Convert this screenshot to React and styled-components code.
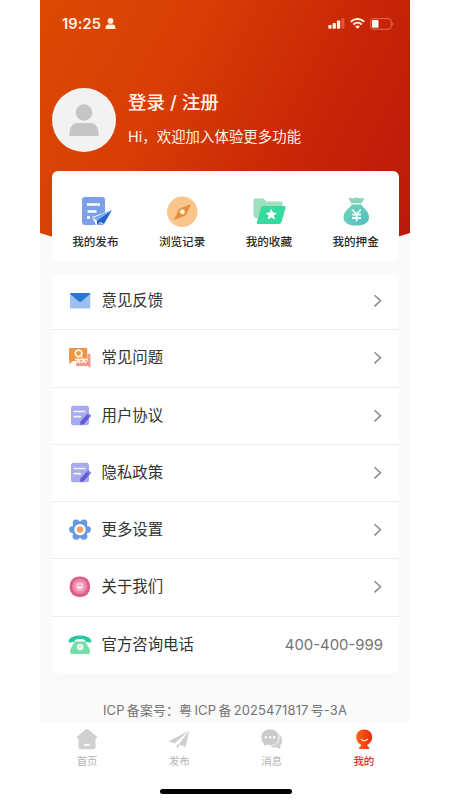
import React from "react";
import styled, { createGlobalStyle } from "styled-components";

const GlobalStyle = createGlobalStyle`
  *, *::before, *::after { box-sizing: border-box; }
  body { margin: 0; background: #fff; }
  svg { display: block; flex: none; }
`;

const Phone = styled.main`
  width: 370px;
  height: 800px;
  margin-left: 40px;
  display: flex;
  flex-direction: column;
  background: #fafafa;
  color: #333;
  font-family: Inter, "Noto Sans CJK SC", sans-serif;
  white-space: nowrap;
  overflow: hidden;
`;

const Hero = styled.header`
  height: 246px;
  flex: none;
  color: #fff3e8;
  background: linear-gradient(118deg, #dc4a03 0%, #d73d05 35%, #c92706 65%, #bb180d 100%);
  clip-path: polygon(0 0, 100% 0, 100% 233px, 96.5% 237px, 75% 244px, 50% 246px, 25% 244px, 3.5% 237px, 0 233px);
`;

const StatusBar = styled.div`
  height: 47px;
  padding: 0 16px 0 22px;
  display: flex;
  align-items: center;
  justify-content: space-between;
`;

const StatusGroup = styled.div`
  display: flex;
  align-items: center;
  gap: ${({ $gap }) => $gap}px;
`;

const Clock = styled.time`
  font-size: 14.6px;
  font-weight: 600;
  letter-spacing: 0.15px;
`;

const Profile = styled.div`
  display: flex;
  gap: 12px;
  padding: 41px 12px 0;
`;

const Avatar = styled.div`
  width: 64px;
  height: 64px;
  flex: none;
  display: grid;
  place-items: center;
  border-radius: 50%;
  background: #f2f2f2;
`;

const Greeting = styled.div`
  display: flex;
  flex-direction: column;
  gap: 11px;
  padding-top: 1px;
`;

const Login = styled.div`
  font-size: 18.5px;
  line-height: 26px;
  font-weight: 500;
`;

const Welcome = styled.div`
  font-size: 14.4px;
  line-height: 22px;
  letter-spacing: 0.05px;
`;

const QuickCard = styled.nav`
  position: relative;
  height: 91px;
  margin: -75px 11px 0 12px;
  flex: none;
  display: grid;
  grid-template-columns: repeat(4, 1fr);
  border-radius: 6px;
  background: #fff;
`;

const QuickItem = styled.div`
  display: flex;
  flex-direction: column;
  align-items: center;
  padding-top: 23px;
  gap: 3px;
  color: #2b2b2b;
  font-size: 11.6px;
  line-height: 18px;
  font-weight: 500;
`;

const List = styled.section`
  margin: 11px 11px 0 12px;
  flex: none;
  background: #fff;
  border-radius: 6px;
`;

const Row = styled.div`
  height: 57.25px;
  padding: 0 17px 0 15.5px;
  display: flex;
  align-items: center;
  border-bottom: 1px solid #ededed;
  &:last-child { height: 56px; border-bottom: 0; padding-right: 16px; }
`;

const RowLabel = styled.span`
  flex: 1;
  margin-left: 10px;
  font-size: 15.4px;
  line-height: 24px;
`;

const Hotline = styled.span`
  font-size: 14.9px;
  color: #737373;
`;

const Filing = styled.footer`
  flex: none;
  height: 49px;
  padding-top: 27px;
  text-align: center;
  font-size: 12.9px;
  line-height: 22px;
  letter-spacing: 0.17px;
  word-spacing: -1.5px;
  color: #737373;
`;

const Bottom = styled.div`
  flex: 1;
  display: flex;
  flex-direction: column;
  background: #fff;
`;

const TabBar = styled.nav`
  flex: 1;
  padding-left: 1px;
  display: grid;
  grid-template-columns: repeat(4, 1fr);
`;

const Tab = styled.div`
  display: flex;
  flex-direction: column;
  align-items: center;
  padding-top: 6px;
  gap: 2px;
  color: ${({ $active }) => ($active ? "#dc3029" : "#b3b3b3")};
  font-size: 10.5px;
  line-height: 16px;
  font-weight: ${({ $active }) => ($active ? 500 : 400)};
`;

const HomeBar = styled.div`
  width: 132px;
  height: 5px;
  margin: 0 0 6.5px 120px;
  border-radius: 3px;
  background: #000;
`;

const PersonIcon = ({ size, color }) => (
  <svg width={size} height={size} viewBox="0 0 32 32" fill={color}>
    <circle cx="16" cy="8.5" r="8.3" />
    <path d="M1.5 32v-3c0-6 3.5-10 8-10h13c4.5 0 8 4 8 10v3z" />
  </svg>
);

const SignalIcon = () => (
  <svg width="17" height="11" viewBox="0 0 17 11" fill="#fff0df">
    <rect x=".3" y="7" width="3.3" height="3.7" rx=".8" />
    <rect x="4.6" y="5" width="3.3" height="5.7" rx=".8" />
    <rect x="8.9" y="2.5" width="3.3" height="8.2" rx=".8" />
    <rect x="13.4" width="3" height="10.5" rx=".8" opacity=".25" />
  </svg>
);

const WifiIcon = () => (
  <svg width="15" height="11" viewBox="0 0 15 11" fill="none" stroke="#fff0df" strokeWidth="2.1">
    <path d="M.8 3.8c3.8-3.7 9.6-3.7 13.4 0M3.3 6.4c2.4-2.2 6-2.2 8.4 0" />
    <path d="M5.2 8.4c1.5-1.2 3.1-1.2 4.6 0L7.5 10.7z" fill="#fff0df" stroke="none" />
  </svg>
);

const BatteryIcon = () => (
  <svg width="24" height="12" viewBox="0 0 24 12">
    <rect x=".6" y=".6" width="20.6" height="10.6" rx="2.8" fill="none" stroke="#f3a18c" strokeOpacity=".6" />
    <rect x="2" y="2" width="6.5" height="7.8" rx="1.2" fill="#fff" />
    <path d="M22.3 4.2c1.5.5 1.5 3 0 3.5z" fill="#f3a18c" fillOpacity=".6" />
  </svg>
);

const PublishIcon = () => (
  <svg width="34" height="36" viewBox="0 0 34 36">
    <rect x="4" y="3" width="23" height="28" rx="3" fill="#7c9fe9" />
    <path d="M9 10.5h13M9.5 17.5h9M9 23.5h3" stroke="#fff" strokeWidth="2.5" />
    <path d="M14 23 34 16 27 31 21 28.5 18.5 33 16.5 27.5z" fill="#fff" />
    <path d="M34 16 14.5 24l4.5 2.3z" fill="#79aaf0" />
    <path d="M34 16 19 26.5v4.5l3-3 4 2z" fill="#2265cf" />
  </svg>
);

const CompassIcon = () => (
  <svg width="34" height="36" viewBox="0 0 34 36">
    <circle cx="17.3" cy="17.8" r="15.2" fill="#f9c58b" />
    <path d="M26 10 21 21 9 26l5-11z" fill="#e98b34" />
    <circle cx="17.4" cy="17.8" r="2.7" fill="#fff4dd" stroke="#d9b169" />
  </svg>
);

const FolderIcon = () => (
  <svg width="34" height="36" viewBox="0 0 34 36">
    <path d="M1.5 6.5a2 2 0 0 1 2-2h8l3 3h14a2 2 0 0 1 2 2v15h-25q-4 0-4-4z" fill="#9edfbd" />
    <path d="M10.5 12H32q2 0 1.5 2l-4 14q-.6 2-2.5 2H6.5q-2.2 0-1.5-2l4-14q.5-2 1.5-2z" fill="#36d99e" />
    <path d="m19.3 14.8 1.7 3.7 4 .4-3 2.7.9 4-3.6-2.1-3.5 2.1.8-4-3-2.7 4-.4z" fill="#fff" />
  </svg>
);

const MoneyIcon = () => (
  <svg width="34" height="36" viewBox="0 0 34 36">
    <defs>
      <linearGradient id="bag" x2="1" y2="1">
        <stop stopColor="#72d6bb" />
        <stop offset="1" stopColor="#51bdc0" />
      </linearGradient>
    </defs>
    <path d="m9.5 3.8 4.5.8 3.5-1 3.5 1 4.5-.8-3.7 7h-9z" fill="#8bd2bb" />
    <path d="M13 10.5h9c2.5 3.5 8 7 8 12.7 0 5-4 8.4-12.7 8.4S4.5 28.2 4.5 23.2C4.5 17.5 10.5 14 13 10.5z" fill="url(#bag)" />
    <path d="M12.5 9.7h10" stroke="#effff8" strokeWidth="1.3" />
    <path d="m13.2 15.5 4.3 5 4.3-5M17.5 20.5v7M13 20.7h9M13 24h9" stroke="#efffff" strokeWidth="1.8" fill="none" />
  </svg>
);

const MailIcon = () => (
  <svg width="24" height="24" viewBox="0 0 24 24">
    <rect x="2" y="4.2" width="20.3" height="15.3" rx="1" fill="#9dc0f1" />
    <path d="M2 4.7q0-.7 1-.7h18.3q1 0 1 .7l-8.2 7.4q-2 1.7-4 0z" fill="#2b77ce" />
    <path d="M8.5 10.7q3.7 4.2 7.3 0l-1.7 1.4q-2 1.7-4 0z" fill="#46a6d5" />
  </svg>
);

const QuestionIcon = () => (
  <svg width="24" height="24" viewBox="0 0 24 24">
    <path d="M19.5 8h2.9v14l-2.7-2H8v-4.5h11.5z" fill="#f1998c" />
    <rect x="1" y="2" width="18.2" height="13" rx="1.2" fill="#eb9546" />
    <path d="M1.4 14v4.2L6 14z" fill="#eb9546" />
    <ellipse cx="10.6" cy="7.4" rx="3.3" ry="3.3" fill="none" stroke="#fff3df" strokeWidth="1.8" />
    <path d="m11.6 8.9 2.6 2.3" stroke="#fff3df" strokeWidth="1.6" />
    <path d="M7 13.4h12.5M8.5 17.2l1.8-3.3 1.8 3.3M14 17.2l1.8-3.3 1.8 3.3" stroke="#fff3df" strokeWidth="1.6" fill="none" />
  </svg>
);

const DocumentIcon = () => (
  <svg width="24" height="24" viewBox="0 0 24 24">
    <rect x="3" y="1.7" width="18" height="19.5" rx="2.5" fill="#a8abed" />
    <path d="M6.2 7.5h10.5M6.2 12.7h6" stroke="#f4f4ff" strokeWidth="1.7" strokeLinecap="round" />
    <path d="m12.5 17.6 7.6-8.4 3 2.6-7.4 8.5-3.6.8z" fill="#625ad6" />
    <path d="m18.7 10.7 1.4-1.5 3 2.6-1.4 1.5z" fill="#8380df" />
  </svg>
);

const SettingsIcon = () => (
  <svg width="24" height="24" viewBox="0 0 24 24">
    <g fill="#6898df">
      <circle cx="12" cy="11.6" r="8.3" />
      <circle cx="4.5" cy="11.6" r="3.4" /><circle cx="19.5" cy="11.6" r="3.4" />
      <circle cx="8.1" cy="5" r="3.5" /><circle cx="15.9" cy="5" r="3.5" />
      <circle cx="8.1" cy="18.2" r="3.5" /><circle cx="15.9" cy="18.2" r="3.5" />
    </g>
    <circle cx="12" cy="11.6" r="5.7" fill="#f7fbff" />
    <circle cx="12" cy="11.6" r="3.2" fill="#efa164" />
  </svg>
);

const AboutIcon = () => (
  <svg width="24" height="24" viewBox="0 0 24 24">
    <rect x="1.7" y="1.5" width="20.3" height="20.5" rx="9" fill="#dc5c86" />
    <circle cx="11.8" cy="11.3" r="7.6" fill="#ec86a7" />
    <circle cx="11.8" cy="11.6" r="4.7" fill="#f6b1c6" />
    <path d="M8.6 11.5q3.2 4.5 6.4 0" fill="#fff1f5" />
    <path d="M8.8 9.2h1.6M13.2 9.2h1.6" stroke="#fff0f5" strokeWidth="1.2" />
  </svg>
);

const TelephoneIcon = () => (
  <svg width="24" height="24" viewBox="0 0 24 24">
    <path d="M6.5 8.6h11c1 3.6 4.5 6.4 4.5 9.6v1.5q0 1.2-1.2 1.2H3.4q-1.2 0-1.2-1.2v-1.5c0-3.2 3.3-6 4.3-9.6z" fill="#79dda9" />
    <path d="M.8 7.2C3.7 1 20.3 1 23.2 7.2c.6 1.4-.3 2.4-1.6 2.3l-2.9-.5c-1.2-.2-1.7-1-1.5-2.1-3-1.1-7.4-1.1-10.4 0 .2 1.1-.3 1.9-1.5 2.1l-2.9.5C1.1 9.6.2 8.6.8 7.2z" fill="#27c9a0" />
    <circle cx="12.2" cy="14" r="3.2" fill="#e9fff3" />
    <circle cx="12.2" cy="14" r="1.2" fill="#c4f0d8" />
  </svg>
);

const ChevronIcon = () => (
  <svg width="9" height="14" viewBox="0 0 9 14" fill="none" stroke="#888" strokeWidth="1.5">
    <path d="m1.5 1.2 6 5.6-6 5.6" />
  </svg>
);

const HomeIcon = () => (
  <svg width="24" height="24" viewBox="0 0 24 24">
    <path d="M12 .9q.8 0 1.4.5l8.3 7q1 1 0 1.8h-1.2V19q0 2.2-2.2 2.2H5.7q-2.2 0-2.2-2.2v-8.8H2.3q-1-.8 0-1.8l8.3-7q.6-.5 1.4-.5z" fill="#d0d0d0" />
    <path d="M9 17h6" stroke="#fff" strokeWidth="1.6" />
  </svg>
);

const SendIcon = () => (
  <svg width="24" height="24" viewBox="0 0 24 24" fill="#d0d0d0">
    <path d="M22.2 2.5 1.5 13.2l6.4 2.3z" />
    <path d="M22.2 2.5 18.6 19l-7-2.5zM9.5 16.2l3.3 1.2-2.7 3.6z" />
    <path d="M22.2 2.5 9.2 15.8" stroke="#fff" strokeWidth=".5" />
  </svg>
);

const ChatIcon = () => (
  <svg width="24" height="24" viewBox="0 0 24 24">
    <path d="M18.5 5.5c3.4 2.5 4.5 6 3.5 9.3-.3 1.1-1 2.1-1.8 2.9v3.6l-3-1.9c-4 .5-6.9-.4-8.8-3z" fill="#d0d0d0" />
    <path d="M10.1.9c5.2 0 8.9 3.5 8.9 8.3s-3.7 8.4-8.9 8.4c-1.2 0-2.4-.2-3.4-.5L3.4 18.5v-3.1C1.7 13.9 1 11.7 1 9.2 1 4.4 4.7.9 10.1.9z" fill="#cbcbcb" stroke="#fff" />
    <circle cx="5.8" cy="9.3" r="1.2" fill="#fff" /><circle cx="10" cy="9.3" r="1.2" fill="#fff" /><circle cx="14.2" cy="9.3" r="1.2" fill="#fff" />
  </svg>
);

const MineIcon = () => (
  <svg width="24" height="24" viewBox="0 0 24 24">
    <defs>
      <linearGradient id="mine" x2="1">
        <stop stopColor="#ff6517" />
        <stop offset="1" stopColor="#e92b0b" />
      </linearGradient>
    </defs>
    <path d="M12.2 1.5c4.9 0 8 3.4 8 7.7 0 3.5-2 6.3-4.8 7.3v1.8c1.2.4 1.8 1.2 2 2.8H6.9c.2-1.6.9-2.4 2-2.8v-1.8c-2.7-1-4.7-3.8-4.7-7.3 0-4.3 3.1-7.7 8-7.7z" fill="url(#mine)" />
    <path d="M9.2 11.3q3.1 3 6.2 0" fill="none" stroke="#ffe1c4" strokeWidth="1.2" strokeLinecap="round" />
  </svg>
);

const QUICK = [
  ["我的发布", PublishIcon],
  ["浏览记录", CompassIcon],
  ["我的收藏", FolderIcon],
  ["我的押金", MoneyIcon],
];

const ROWS = [
  ["意见反馈", MailIcon],
  ["常见问题", QuestionIcon],
  ["用户协议", DocumentIcon],
  ["隐私政策", DocumentIcon],
  ["更多设置", SettingsIcon],
  ["关于我们", AboutIcon],
  ["官方咨询电话", TelephoneIcon, "400-400-999"],
];

const TABS = [
  ["首页", HomeIcon],
  ["发布", SendIcon],
  ["消息", ChatIcon],
  ["我的", MineIcon, true],
];

export default function App() {
  return (
    <>
      <GlobalStyle />
      <Phone>
        <Hero>
          <StatusBar>
            <StatusGroup $gap={4}>
              <Clock>19:25</Clock>
              <PersonIcon size={11} color="#fff0df" />
            </StatusGroup>
            <StatusGroup $gap={5}>
              <SignalIcon />
              <WifiIcon />
              <BatteryIcon />
            </StatusGroup>
          </StatusBar>
          <Profile>
            <Avatar><PersonIcon size={32} color="#c5c5c5" /></Avatar>
            <Greeting>
              <Login>登录 / 注册</Login>
              <Welcome>Hi，欢迎加入体验更多功能</Welcome>
            </Greeting>
          </Profile>
        </Hero>
        <QuickCard>
          {QUICK.map(([label, Icon]) => (
            <QuickItem key={label}><Icon />{label}</QuickItem>
          ))}
        </QuickCard>
        <List>
          {ROWS.map(([label, Icon, value]) => (
            <Row key={label}>
              <Icon />
              <RowLabel>{label}</RowLabel>
              {value ? <Hotline>{value}</Hotline> : <ChevronIcon />}
            </Row>
          ))}
        </List>
        <Filing>ICP 备案号：粤 ICP 备 2025471817 号-3A</Filing>
        <Bottom>
          <TabBar>
            {TABS.map(([label, Icon, active]) => (
              <Tab key={label} $active={active}><Icon />{label}</Tab>
            ))}
          </TabBar>
          <HomeBar />
        </Bottom>
      </Phone>
    </>
  );
}
